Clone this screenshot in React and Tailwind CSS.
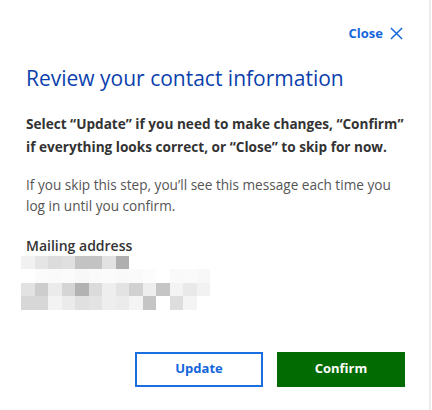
const rows = [
  ["#f1f1f1", "#e5e5e5", "#dcdcdc", "#e0e0e0", "#c3c3c3", "#c3c3c3", "#e2e2e2", "#afafaf"],
  ["#ffffff", "#fbfbfb", "#fafafa", "#fbfbfb", "#f8f8f8", "#fafafa", "#fbfbfb", "#f9f9f9", "#fafafa", "#fcfcfc", "#ffffff", "#f9f9f9", "#fafafa", "#f8f8f8"],
  ["#e2e2e2", "#cdcdcd", "#ebebeb", "#d5d5d5", "#b2b2b2", "#dbdbdb", "#eeeeee", "#e3e3e3", "#d1d1d1", "#eeeeee", "#c5c5c5", "#f3f3f3", "#e9e9e9", "#f2f2f2"],
  ["#d7d7d7", "#d7d7d7", "#f3f3f3", "#ebebeb", "#e0e0e0", "#e3e3e3", "#eeeeee", "#ebebeb", "#f4f4f4", "#c5c5c5", "#ffffff", "#dddddd", "#f4f4f4"],
];

export default function App() {
  return (
    <div className="h-[410px] w-[432px] bg-white" style={{ fontFamily: '"Open Sans", sans-serif' }}>
      <div className="h-full w-[431px] border-r-2 border-[#ececec] pl-[26px] pr-[24px]">
        <div className="flex justify-end pr-[2px] pt-[24px]">
          <button type="button" className="flex items-center gap-[7px] text-[13px] font-bold text-[#1466dc]">
            Close
            <svg width="13" height="13" viewBox="0 0 14 14" fill="none" stroke="#1466dc" strokeWidth="1.6">
              <path d="M1 1L13 13M13 1L1 13" />
            </svg>
          </button>
        </div>
        <h2 className="mt-[20px] text-[21px] leading-[28px] text-[#0b3fad]">Review your contact information</h2>
        <p className="mt-[20px] text-[13.6px] font-bold leading-[23px] text-[#333333]">
          Select “Update” if you need to make changes, “Confirm” if everything looks correct, or “Close” to skip for now.
        </p>
        <p className="mt-[16px] text-[13.6px] leading-[21px] text-[#555555]">
          If you skip this step, you’ll see this message each time you log in until you confirm.
        </p>
        <div className="mt-[19px] text-[14px] font-semibold leading-[21px] text-[#333333]">Mailing address</div>
        <div className="-ml-[5px] flex flex-col">
          {rows.map((row, i) => (
            <div key={i} className="flex">
              {row.map((c, j) => (
                <div key={j} className="h-[13.5px] w-[13.5px]" style={{ backgroundColor: c }} />
              ))}
            </div>
          ))}
        </div>
        <div className="mt-[42px] flex justify-end gap-[14px]">
          <button type="button" className="h-[35px] w-[128px] border-2 border-[#1a6fe0] text-[13px] font-bold text-[#1466dc]">
            Update
          </button>
          <button type="button" className="h-[35px] w-[128px] bg-[#026b02] text-[13px] font-bold text-white">
            Confirm
          </button>
        </div>
      </div>
    </div>
  );
}
